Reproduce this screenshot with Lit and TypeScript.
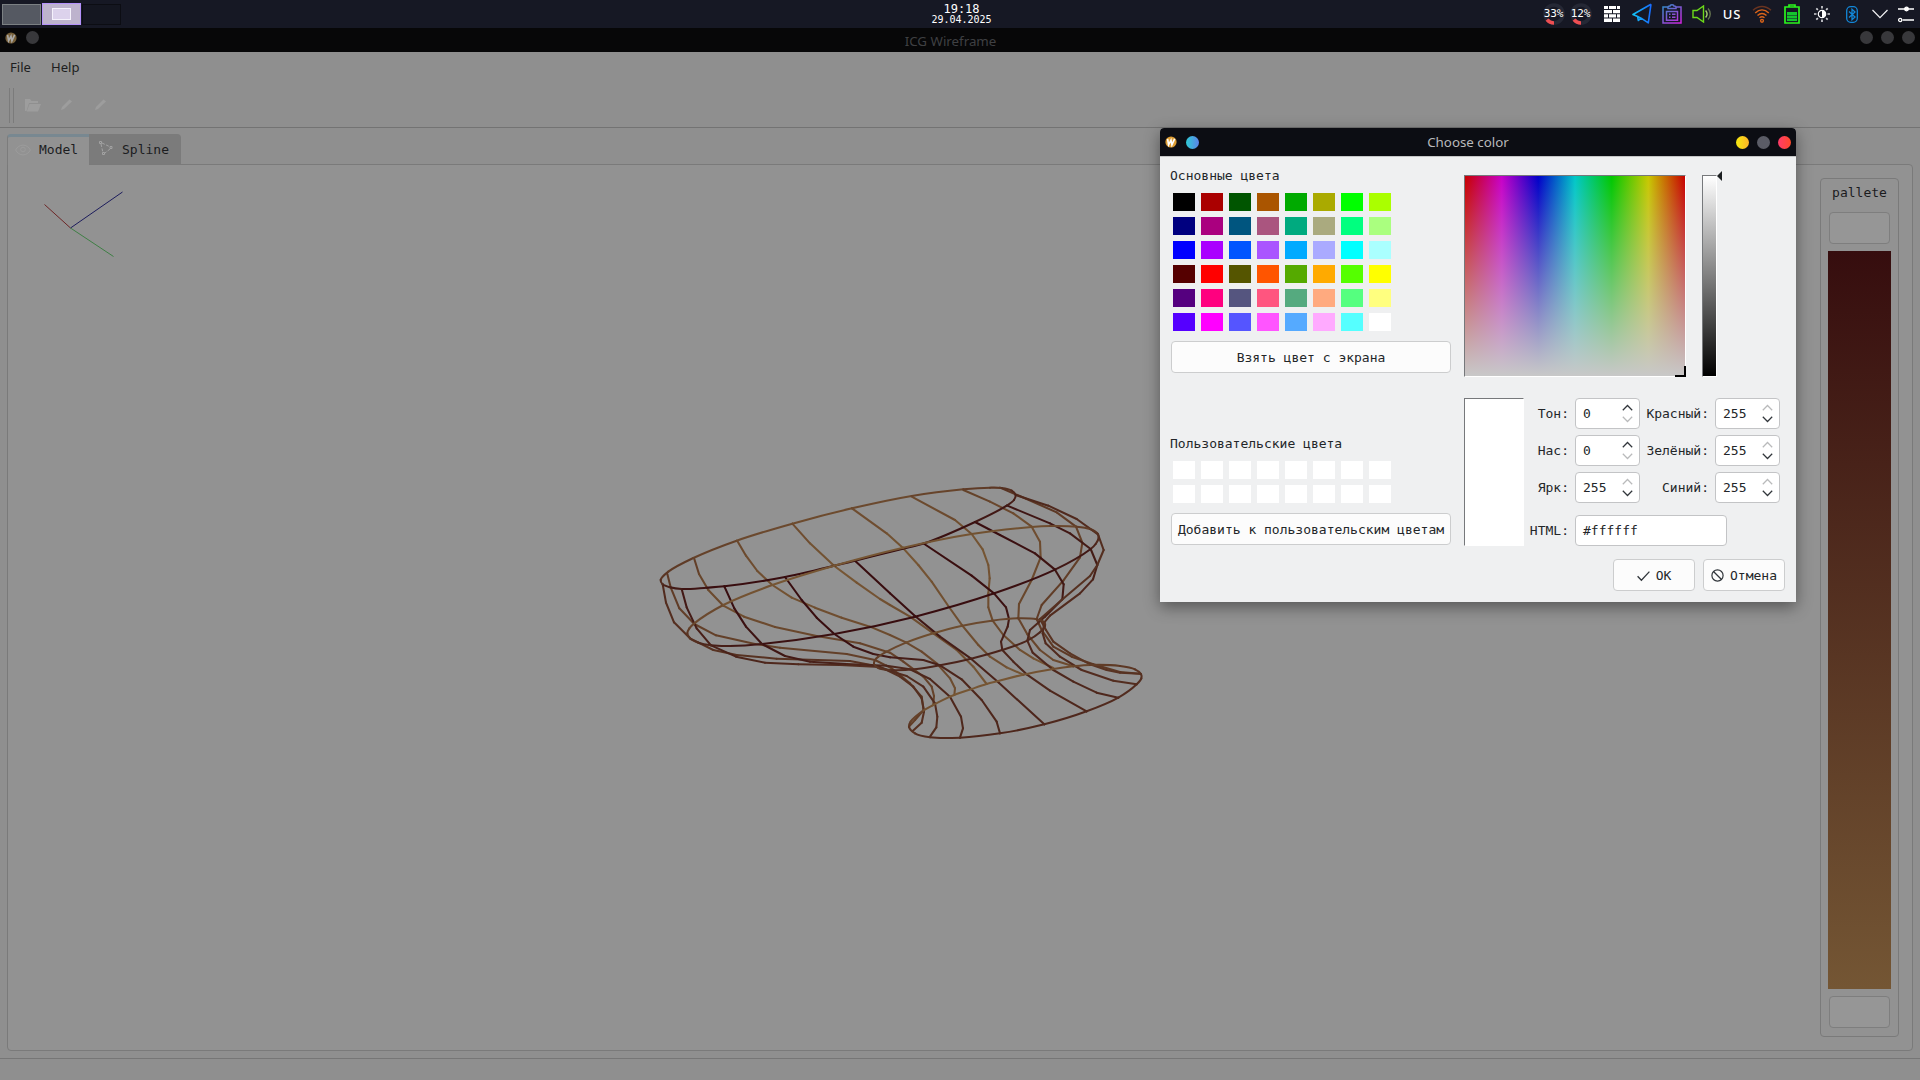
import { LitElement, html, css, svg } from "lit";
import { customElement } from "lit/decorators.js";

const BASIC: string[][] = [
  ["#000000", "#aa0000", "#005500", "#aa5500", "#00aa00", "#aaaa00", "#00ff00", "#aaff00"],
  ["#00007f", "#aa007f", "#00557f", "#aa557f", "#00aa7f", "#aaaa7f", "#00ff7f", "#aaff7f"],
  ["#0000ff", "#aa00ff", "#0055ff", "#aa55ff", "#00aaff", "#aaaaff", "#00ffff", "#aaffff"],
  ["#550000", "#ff0000", "#555500", "#ff5500", "#55aa00", "#ffaa00", "#55ff00", "#ffff00"],
  ["#55007f", "#ff007f", "#55557f", "#ff557f", "#55aa7f", "#ffaa7f", "#55ff7f", "#ffff7f"],
  ["#5500ff", "#ff00ff", "#5555ff", "#ff55ff", "#55aaff", "#ffaaff", "#55ffff", "#ffffff"],
];
const CUSTOM: string[][] = [Array(8).fill("#ffffff"), Array(8).fill("#ffffff")];

/* Wireframe geometry. Coordinates are in thirds of a pixel; t is the depth
   along the line (0 = near, dark; 1 = far, light). */
interface Line { pts: number[]; t: number[]; ring?: boolean; }

const LINES: Line[] = [
  // meridians, far side
  { pts: [82,312,92,352,118,415,163,462,228,496,345,522,420,533,620,552,705,570,755,595,810,640,845,680,851,720,825,750,807,770], t: [.6,.7,.7,.6,.7] },
  { pts: [162,264,177,312,205,360,250,407,312,440,405,471,530,498,660,520,750,548,790,575,850,620,875,650,882,678,880,702], t: [.65,.9,.75,.7,.75] },
  { pts: [292,213,318,257,352,303,397,345,455,383,525,413,605,443,690,470,750,495,798,517,845,545,890,580,930,625,945,655,943,675], t: [.8,.95,.85,.8,.9] },
  { pts: [457,161,510,220,583,288,650,338,720,387,750,405,810,440,880,490,950,540,1000,590,1040,642], t: [.85,1,.9,.85,1] },
  { pts: [636,115,740,190,790,235,835,285,875,335,925,408,967,467,1015,525,1050,560,1100,592,1150,614], t: [.85,1,.9,.85,1] },
  { pts: [815,80,945,150,995,192,1028,238,1045,285,1049,325,1045,370,1045,412,1058,452,1090,495,1140,540,1180,565,1240,594], t: [.8,1,.9,.8,1] },
  { pts: [970,60,1050,95,1120,130,1175,170,1200,215,1202,262,1175,330,1137,402,1135,445,1162,493,1200,540,1240,570,1300,589], t: [.7,.9,.8,.75,.85] },
  { pts: [1080,53,1160,87,1250,127,1308,170,1327,218,1320,262,1270,332,1205,405,1190,447,1205,480,1240,530,1295,560,1360,583,1440,606,1500,611], t: [.5,.7,.65,.6,.6] },
  // meridians, near side
  { pts: [68,343,78,398,102,457,150,505,220,540,290,555,410,566,630,573,705,587,740,600,780,620,820,650,845,685,852,725,845,758,818,783], t: [.4,.5,.5,.45,.5] },
  { pts: [125,357,140,412,170,475,213,526,288,560,375,578,475,583,600,585,720,591,750,603,800,618,850,650,885,700,892,740,889,772,870,800], t: [.15,.3,.45,.4,.45] },
  { pts: [253,349,283,415,318,470,366,522,435,558,510,575,620,582,740,587,810,598,870,627,930,680,963,740,969,775,960,803], t: [0,.1,.35,.35,.4] },
  { pts: [435,321,485,390,530,443,583,492,640,530,700,552,750,562,850,570,900,586,965,628,1025,690,1070,755,1080,790], t: [0,0,.2,.35,.35] },
  { pts: [645,272,750,370,825,438,900,500,993,566,1075,637,1213,763], t: [0,0,.2,.3,.35] },
  { pts: [853,222,995,317,1062,370,1098,412,1107,447,1103,470,1083,515,1087,540,1120,575,1160,613,1230,662,1340,724], t: [0,.05,.25,.35,.35] },
  { pts: [1005,156,1080,195,1185,250,1245,299,1271,343,1267,388,1215,440,1170,480,1162,512,1178,548,1240,600,1300,635,1370,668,1435,683], t: [0,.1,.35,.35,.35] },
  { pts: [1102,107,1230,160,1290,190,1352,237,1372,285,1359,328,1320,370,1230,437,1213,457,1208,490,1217,520,1260,560,1325,600,1420,632,1490,643], t: [.1,.2,.45,.4,.45] },
  { pts: [1127,75,1225,107,1310,147,1374,193,1391,240,1372,285,1350,318,1265,390,1200,447,1218,480,1240,515,1290,550,1350,583,1400,600,1440,608,1500,611], t: [.35,.45,.5,.55,.5] },
  // rings, top to bottom
  { ring: true, t: [.5,.6,.65,.8,.85,.85,.8,.7,.6,.55,.4,.3,.25,.2,.1,0,0,0,0,0,.05,.15,.2,.35],
    pts: [62,330,85,305,160,264,290,212,457,161,636,115,815,78,970,58,1050,53,1085,54,1115,62,1127,75,1122,90,1100,107,1005,156,853,220,810,231,645,272,435,321,253,349,200,353,125,357,90,352,68,343] },
  { ring: true, t: [.6,.7,.75,.9,1,1,1,.95,.9,.85,.75,.6,.5,.45,.35,.25,.05,0,0,0,.1,.2,.3,.4,.5],
    pts: [142,490,148,475,163,460,250,405,397,345,583,287,790,233,995,192,1175,171,1230,168,1310,170,1350,177,1372,190,1376,203,1367,222,1352,237,1245,299,1063,370,825,440,583,492,366,522,270,528,213,526,175,518,150,505] },
  { ring: true, t: [.6,.65,.7,.75,.85,.9,.85,.8,.75,.65,.55,.5,.4,.35,.3,.3,.3,.35,.45,.55],
    pts: [702,582,705,570,715,560,740,545,798,518,880,490,967,467,1055,452,1133,445,1190,448,1213,457,1215,468,1200,487,1162,512,1086,540,993,566,900,586,830,597,750,600,715,594] },
  { ring: true, t: [.55,.6,.85,.95,1,1,1,1,1,.9,.8,.7,.6,.55,.5,.45,.45,.4,.4,.35,.35,.4,.4,.5],
    pts: [807,770,812,755,850,722,878,706,930,680,995,657,1040,642,1075,633,1150,614,1240,597,1300,589,1350,585,1440,588,1485,598,1503,612,1504,625,1490,643,1435,683,1340,724,1213,763,1080,790,960,803,870,802,825,790] },
];

function shade(t: number): string {
  const near = [56, 13, 15], far = [118, 86, 52];
  return `rgb(${near.map((n, i) => Math.round(n + (far[i] - n) * t)).join(",")})`;
}

function sample(values: number[], f: number): number {
  const p = Math.max(0, Math.min(values.length - 1, f * (values.length - 1)));
  const i = Math.min(values.length - 2, Math.floor(p));
  return values[i] + (values[i + 1] - values[i]) * (p - i);
}

function drawLine(line: Line) {
  const n = line.pts.length / 2;
  const at = (i: number) => { const k = ((i % n) + n) % n; return [line.pts[2 * k], line.pts[2 * k + 1]]; };
  const out: unknown[] = [];
  if (!line.ring) {
    for (let i = 0; i < n - 1; i++) {
      const [a, b] = [at(i), at(i + 1)];
      out.push(svg`<path d="M${a[0]} ${a[1]}L${b[0]} ${b[1]}" stroke=${shade(sample(line.t, (i + .5) / (n - 1)))}></path>`);
    }
    return out;
  }
  for (let i = 0; i < n; i++) {
    const [p0, p1, p2, p3] = [at(i - 1), at(i), at(i + 1), at(i + 2)];
    // centripetal Catmull-Rom span, converted to a cubic Bezier
    const d = (a: number[], b: number[]) => Math.sqrt(Math.hypot(a[0] - b[0], a[1] - b[1]));
    const [d1, d2, d3] = [d(p0, p1), d(p1, p2), d(p2, p3)];
    const c1 = [0, 1].map(k => (d1 * d1 * p2[k] - d2 * d2 * p0[k] + (2 * d1 * d1 + 3 * d1 * d2 + d2 * d2) * p1[k]) / (3 * d1 * (d1 + d2)));
    const c2 = [0, 1].map(k => (d3 * d3 * p1[k] - d2 * d2 * p3[k] + (2 * d3 * d3 + 3 * d3 * d2 + d2 * d2) * p2[k]) / (3 * d3 * (d3 + d2)));
    const t = (line.t[i] + line.t[(i + 1) % n]) / 2;
    out.push(svg`<path d="M${p1[0]} ${p1[1]}C${c1[0]} ${c1[1]} ${c2[0]} ${c2[1]} ${p2[0]} ${p2[1]}" stroke=${shade(t)}></path>`);
  }
  return out;
}

@customElement("app-root")
export class AppRoot extends LitElement {
  static styles = css`
    :host { display: block; width: 1920px; height: 1080px; overflow: hidden; position: relative;
      font: 13px/16px "DejaVu Sans Mono", "Liberation Mono", monospace; color: #232629; }
    * { box-sizing: border-box; }
    svg { display: block; flex: none; }
    .screen { display: flex; flex-direction: column; height: 1080px; background: #8f8f8f; }
    .panel { height: 28px; flex: none; background: #161824; display: grid; grid-template-columns: 1fr auto 1fr; color: #fff; }
    .pager { display: flex; gap: 1px; padding: 4px 0 0 2px; }
    .desk { width: 39px; height: 21px; border: 1px solid #7b8083; background: #555962; }
    .desk.active { border-color: #b491fb; background: #bdb3cd; padding: 4px 9px; height: 22px; margin-top: -1px; }
    .desk.empty { border-color: #0c0d13; background: #141620; }
    .mini { height: 12px; border: 1px solid #f5f2fc; background: #dcd2ec; }
    .clock { text-align: center; padding-top: 2px; padding-left: 3px; }
    .time { font-size: 12px; line-height: 14px; height: 12px; }
    .date { font-size: 10px; line-height: 11px; }
    .tray { display: flex; justify-content: flex-end; padding-right: 1px; }
    .cell { width: 30px; height: 28px; display: flex; align-items: center; justify-content: center; }
    .cell.narrow { width: 26px; }
    .cell.load { width: 27px; display: grid; font-size: 11px; letter-spacing: -.1px; }
    .cell.load > * { grid-area: 1 / 1; place-self: center; }
    .cell.last { margin-right: 3px; }
    .lang { font: 500 13px/28px "Noto Sans", sans-serif; letter-spacing: .9px; }
    .title { height: 24px; flex: none; background: #070708; color: #3f4043; display: grid; grid-template-columns: 1fr auto 1fr; padding: 0 5px; font: 13.33px/26px "Noto Sans", sans-serif; }
    .title .name { margin-left: -19px; }
    .left, .right { display: flex; align-items: center; }
    .title .left, .title .right { height: 19px; }
    .right { justify-content: flex-end; }
    .dot { width: 13px; height: 13px; border-radius: 50%; background: #38383b; }
    .left .dot { margin-left: 9px; }
    .title .right { gap: 8px; }
    .menu { height: 31px; flex: none; display: flex; gap: 20px; padding: 0 10px; font: 13.1px/31px "Noto Sans", sans-serif; color: #1d1e20; }
    .tools { height: 45px; flex: none; border-bottom: 1px solid #737373; display: flex; padding: 5px 9px; }
    .grip { width: 5px; height: 35px; border: solid #7b7b7b; border-width: 0 1px; }
    .tools svg { margin-top: 6px; }
    .tools .folder { margin-left: 8px; }
    .tools .pen { margin-left: 10px; }
    .work { flex: 1; display: flex; flex-direction: column; padding: 6px 7px 7px; }
    .tabs { display: flex; height: 31px; margin-bottom: -1px; z-index: 1; }
    .tab { height: 30px; display: flex; align-items: center; line-height: 30px; color: #1c1d1f; }
    .tab.on { width: 82px; height: 31px; background: #929292; border: 1px solid #7c7c7c; border-top: 3px solid #788891; border-right: 0; border-bottom: 0; border-radius: 4px 0 0 0; padding: 0 0 2px 7px; line-height: 26px; gap: 8px; }
    .tab.off { width: 92px; background: #7b7b7b; border-radius: 0 4px 0 0; padding: 2px 0 0 9px; gap: 8px; }
    .tab.off svg { margin-top: -5px; }
    .pane { flex: 1; display: flex; background: #929292; border: 1px solid #7a7a7a; border-radius: 0 4px 4px 4px; padding: 13px; }
    .canvas { flex: 1; overflow: visible; min-width: 0; }
    .canvas svg { overflow: visible; }
    .group { width: 79px; border: 1px solid #7a7a7a; border-radius: 4px; display: flex; flex-direction: column; align-items: center; padding: 6px 7px 8px; color: #1b1c1e; }
    .knob { width: 61px; height: 32px; border: 1px solid #7e7e7e; border-radius: 4px; background: #969696; flex: none; }
    .ramp { width: 63px; flex: 1; margin: 7px 0; background: linear-gradient(#360d0e, #745634); }
    .group .cap { height: 27px; line-height: 16px; }
    .status { height: 22px; flex: none; border-top: 1px solid #767676; }

    .dialog { position: absolute; left: 1160px; top: 128px; width: 636px; height: 474px; background: #eff0f1; border-radius: 4px 4px 0 0; box-shadow: 0 5px 16px rgba(0,0,0,.42); display: flex; flex-direction: column; }
    .bar { height: 28px; flex: none; background: #0c0d13; border-radius: 4px 4px 0 0; display: grid; grid-template-columns: 1fr auto 1fr; padding: 0 5px; font: 13.33px/28px "Noto Sans", sans-serif; color: #b8b9bb; }
    .bar .name { margin-left: -20px; }
    .bar .right { gap: 8px; }
    .bar .dot.app { background: linear-gradient(90deg, #2fcbd6, #5c83e8); }
    .dot.min { background: linear-gradient(90deg, #f6ea10, #ffb428); }
    .dot.max { background: #5b5c66; }
    .dot.close { background: linear-gradient(90deg, #ff3b6b, #ff4a2a); }
    .body { flex: 1; display: flex; padding: 11px 11px 0 11px; border-top: 1px solid #c4c5c6; }
    .colors { width: 280px; margin-right: 13px; display: flex; flex-direction: column; }
    .label { height: 25px; line-height: 16px; margin-left: -1px; flex: none; }
    .swatches { display: grid; grid-template-columns: repeat(8, 22px); gap: 6px; grid-auto-rows: 18px; margin-left: 2px; }
    .btn { border: 1px solid #cccdce; border-radius: 4px; background: #fcfcfc; display: flex; align-items: center; justify-content: center; height: 32px; flex: none; padding-top: 1px; white-space: nowrap; }
    .colors .btn { margin-top: 10px; }
    .gap { height: 63px; flex: none; }
    .edit { flex: 1; display: flex; flex-direction: column; padding-top: 7px; }
    .pick { display: flex; height: 203px; }
    .sunk { border: 1px solid #fff; border-top-color: #76787b; border-left-color: #76787b; }
    .hues { width: 222px; height: 202px; position: relative;
      background: linear-gradient(rgba(200,200,200,0), rgb(200,200,200)), linear-gradient(90deg, #c80000, #c800c8 16.67%, #0000c8 33.33%, #00c8c8 50%, #00c800 66.67%, #c8c800 83.33%, #c80000); }
    .mark { position: absolute; right: -1px; bottom: -1px; width: 11px; height: 11px; border: solid #000; border-width: 0 2px 2px 0; }
    .lum { width: 15px; height: 202px; margin-left: 16px; background: linear-gradient(#fff, #000); }
    .arrow { margin-top: -4px; }
    .fields { display: flex; margin-top: 20px; }
    .preview { width: 60px; height: 148px; background: #fff; }
    .grid { display: grid; grid-template-columns: 46px 65px 67px 65px; grid-template-rows: 37px 37px 43px 31px; margin-left: 1px; column-gap: 4px; }
    .lab { line-height: 31px; padding-right: 2px; white-space: nowrap; justify-self: end; }
    .input { height: 31px; border: 1px solid #c3c4c6; border-radius: 4px; background: #fff; line-height: 29px; padding: 0 6px 0 7px; display: flex; justify-content: space-between; align-items: center; }
    .hex { grid-column: 2 / 5; width: 152px; }
    .actions { display: flex; gap: 8px; margin: 13px 0 0 149px; }
    .actions .btn { width: 82px; gap: 6px; }
  `;

  private badge(bg: string, fg: string) {
    return html`<svg width="12" height="12" viewBox="0 0 12 12"><circle cx="6" cy="6" r="5.6" fill=${bg}></circle><path d="M2.6 3l1 5.8L6 4.2l.9 4.6L9.6 2.8" fill="none" stroke=${fg} stroke-width="1.6"></path></svg>`;
  }

  private swatches(rows: string[][]) {
    return html`<div class="swatches">${rows.flat().map(c => html`<div style="background:${c}"></div>`)}</div>`;
  }

  private spin(value: string, up: boolean, down: boolean) {
    const on = "#31363b", off = "#b9babb";
    return html`<div class="input"><span>${value}</span><svg width="11" height="19" viewBox="0 0 11 19" fill="none" stroke-width="1.25">
      <path d="M.8 6.2L5.5 1.5l4.7 4.7" stroke=${up ? on : off}></path><path d="M.8 12.8l4.7 4.7 4.7-4.7" stroke=${down ? on : off}></path></svg></div>`;
  }

  private load(text: string, last = false) {
    return html`<div class="cell load ${last ? "last" : ""}"><svg width="22" height="22" viewBox="0 0 22 22" fill="none" stroke-width="3.6"><circle cx="11" cy="11" r="9" stroke="#252835"></circle><path d="M4 16.700A9 9 0 0 0 11 20" stroke="#ee4e52"></path></svg><span>${text}</span></div>`;
  }

  private tray() {
    return html`<div class="tray">
      ${this.load("33%")}${this.load("12%", true)}
      <div class="cell"><svg width="16" height="16" viewBox="0 0 16 16" fill="#fff"><path d="M0 0h4v3H0zM5 0h7v3H5zM13 0h3v3h-3zM0 4h8v3.2H0zM9 4h7v3.2H9zM0 8.3h4v3.2H0zM5 8.3h7v3.2H5zM13 8.3h3v3.2h-3zM0 12.6h8V16H0zM9 12.6h7V16H9z"></path></svg></div>
      <div class="cell"><svg width="20" height="22" viewBox="0 0 20 22" fill="none" stroke="url(#tg)" stroke-width="1.6" stroke-linejoin="round"><defs><linearGradient id="tg" gradientUnits="userSpaceOnUse" x1="0" x2="20" y1="10" y2="10"><stop offset="0" stop-color="#12c8f5"></stop><stop offset="1" stop-color="#1766ff"></stop></linearGradient></defs><path d="M19 1.200L1 11.500l4.600 2 .8 4 2.700-2.300 7.200 4.600L19 1.200M5.600 13.500l3.500 1.700"></path></svg></div>
      <div class="cell"><svg width="20" height="20" viewBox="0 0 20 20" fill="none" stroke="url(#cb)" stroke-width="1.5"><defs><linearGradient id="cb" gradientUnits="userSpaceOnUse" x1="2" y1="0" x2="18" y2="20"><stop offset="0" stop-color="#2c8fc9"></stop><stop offset="1" stop-color="#d423e0"></stop></linearGradient></defs><path d="M6 3H1v16h18V3h-5M6 4.500V3c0-1 1-1 2-1 0-1.600 4-1.600 4 0 1 0 2 0 2 1v1.500zM4.500 7.500h11v8.700h-11zM7 10.300h1.500M10 10.300h3.500M7 13.300h1.500M10 13.300h3.500"></path></svg></div>
      <div class="cell"><svg width="20" height="18" viewBox="0 0 20 18" fill="none" stroke="#6cd91a" stroke-width="1.4"><path d="M1 5.500h4L11.500 1v16L5 12.500H1z"></path><path d="M13.600 5.500c1.700 2 1.700 5 0 7" stroke="#a4cf6c"></path><path d="M16 3.500c3 3.200 3 7.800 0 11" stroke="#64724f"></path></svg></div>
      <div class="cell"><span class="lang">US</span></div>
      <div class="cell"><svg width="20" height="18" viewBox="0 0 20 18" fill="none" stroke="#d9641a" stroke-width="1.400"><path d="M1 5.200c5.500-5 12.500-5 18 0" stroke="#6a3420"></path><path d="M3.200 8c4.200-4 9.400-4 13.600 0M5.500 10.500c2.900-2.700 6.100-2.700 9 0M7.500 12.800c1.600-1.400 3.400-1.400 5 0"></path><circle cx="10" cy="15.800" r="1.400"></circle></svg></div>
      <div class="cell"><svg width="16" height="20" viewBox="0 0 16 20"><path d="M1 3h14v16H1zM5 3V1h6v2" fill="none" stroke="#2bf51c" stroke-width="1.700"></path><path d="M3 8h10v3H3zM3 11.500h10v2.500H3zM3 14.500h10V17H3z" fill="#14c42e"></path></svg></div>
      <div class="cell"><svg width="16" height="16" viewBox="0 0 16 16"><g stroke="#cfd0d4" stroke-width="1.700"><path d="M8 0v2.500M8 13.500V16M0 8h2.500M13.500 8H16M2.300 2.300l1.600 1.600M12.100 12.100l1.600 1.600M2.300 13.700l1.600-1.600M12.100 3.900l1.600-1.600"></path></g><circle cx="8" cy="8" r="3.700" fill="none" stroke="#fff" stroke-width="1.200"></circle><path d="M8 4.300a3.700 3.700 0 0 1 0 7.400z" fill="#fff"></path></svg></div>
      <div class="cell"><svg width="12" height="17" viewBox="0 0 12 17" fill="none" stroke="#1287d8" stroke-width="1.300"><rect x=".7" y=".7" width="10.600" height="15.600" rx="4"></rect><path d="M3 5.500l6 5.500-3 2.700V3.300L9 6l-6 5.500"></path></svg></div>
      <div class="cell narrow"><svg width="16" height="10" viewBox="0 0 16 10" fill="none" stroke="#f2f2f4" stroke-width="1.200"><path d="M.5 1L8 8.700 15.500 1"></path></svg></div>
      <div class="cell narrow"><svg width="16" height="17" viewBox="0 0 16 17" fill="none" stroke="#fff" stroke-width="1.300"><path d="M0 3h16M4.500 14H16"></path><circle cx="8.500" cy="3" r="1.800" fill="#fff"></circle><circle cx="2.200" cy="14" r="1.600"></circle></svg></div>
    </div>`;
  }

  private dialog() {
    return html`<div class="dialog">
      <div class="bar"><div class="left">${this.badge("#dd9d33", "#fff")}<div class="dot app"></div></div><div class="name">Choose color</div>
        <div class="right"><div class="dot min"></div><div class="dot max"></div><div class="dot close"></div></div></div>
      <div class="body">
        <div class="colors">
          <div class="label">Основные цвета</div>
          ${this.swatches(BASIC)}
          <div class="btn">Взять цвет с экрана</div>
          <div class="gap"></div>
          <div class="label">Пользовательские цвета</div>
          ${this.swatches(CUSTOM)}
          <div class="btn">Добавить к пользовательским цветам</div>
        </div>
        <div class="edit">
          <div class="pick">
            <div class="hues sunk"><div class="mark"></div></div>
            <div class="lum sunk"></div>
            <svg class="arrow" width="6" height="10" viewBox="0 0 6 10"><path d="M5 0v10L0 5z" fill="#1b1e20"></path></svg>
          </div>
          <div class="fields">
            <div class="preview sunk"></div>
            <div class="grid">
              <span class="lab">Тон:</span>${this.spin("0", true, false)}<span class="lab">Красный:</span>${this.spin("255", false, true)}
              <span class="lab">Нас:</span>${this.spin("0", true, false)}<span class="lab">Зелёный:</span>${this.spin("255", false, true)}
              <span class="lab">Ярк:</span>${this.spin("255", false, true)}<span class="lab">Синий:</span>${this.spin("255", false, true)}
              <span class="lab">HTML:</span><div class="input hex">#ffffff</div>
            </div>
          </div>
          <div class="actions">
            <div class="btn"><svg width="13" height="12" viewBox="0 0 13 12" fill="none" stroke="#31363b" stroke-width="1.300"><path d="M.6 6.200l3.800 4L12.400 1.600"></path></svg>OK</div>
            <div class="btn"><svg width="13" height="13" viewBox="0 0 13 13" fill="none" stroke="#31363b" stroke-width="1.200"><circle cx="6.500" cy="6.500" r="5.600"></circle><path d="M2.500 2.500l8 8"></path></svg>Отмена</div>
          </div>
        </div>
      </div>
    </div>`;
  }

  render() {
    return html`
      <div class="screen">
        <div class="panel">
          <div class="pager"><div class="desk"></div><div class="desk active"><div class="mini"></div></div><div class="desk empty"></div></div>
          <div class="clock"><div class="time">19:18</div><div class="date">29.04.2025</div></div>
          ${this.tray()}
        </div>
        <div class="title"><div class="left">${this.badge("#77603a", "#aaa")}<div class="dot"></div></div><div class="name">ICG Wireframe</div>
          <div class="right"><div class="dot"></div><div class="dot"></div><div class="dot"></div></div></div>
        <div class="menu"><span>File</span><span>Help</span></div>
        <div class="tools">
          <div class="grip"></div>
          <svg class="folder" width="22" height="22" viewBox="0 0 22 22"><path d="M3 5h5l1.500 2H16v2H7L4.500 17H3z M7.500 10H19l-3 7.500H4.800z" fill="#9d9d9d"></path></svg>
          <svg class="pen" width="24" height="22" viewBox="0 0 24 22"><path d="M7 16l1-3 7.500-7.500 2.500 2L10 15z" fill="#9d9d9d"></path></svg>
          <svg class="pen" width="24" height="22" viewBox="0 0 24 22"><path d="M7 16l1-3 7.500-7.500 2.500 2L10 15z" fill="#9d9d9d"></path></svg>
        </div>
        <div class="work">
          <div class="tabs">
            <div class="tab on"><svg width="16" height="12" viewBox="0 0 16 12" fill="none" stroke="#9c9c9c"><path d="M.6 6C4-.5 12-.5 15.400 6 12 12.500 4 12.500.6 6z"></path><circle cx="8" cy="5.500" r="2.300"></circle></svg>Model</div>
            <div class="tab off"><svg width="16" height="16" viewBox="0 0 16 16" fill="none" stroke="#a3a3a3"><path d="M1.500 1.500h2v2h-2zM12 6.500h2v2h-2zM4.500 12.500h2v2h-2z"></path><path d="M4 3l8 3.800M12 9l-5 4M3 4l1.800 8" stroke-dasharray="3 1.500"></path></svg>Spline</div>
          </div>
          <div class="pane">
            <div class="canvas">
              <svg width="1797" height="800" viewBox="21 178 1797 800" fill="none">
                <path d="M70.500 228L44.500 204.500" stroke="#6d2626"></path><path d="M70.500 228L122.500 192" stroke="#1c1c5c"></path><path d="M70.500 228L113.500 256.500" stroke="#3f7f45"></path>
                <g transform="translate(640 470) scale(.33333)" stroke-width="6.200" stroke-linecap="round">${LINES.map(drawLine)}</g>
              </svg>
            </div>
            <div class="group"><div class="cap">pallete</div><div class="knob"></div><div class="ramp"></div><div class="knob"></div></div>
          </div>
        </div>
        <div class="status"></div>
      </div>
      ${this.dialog()}`;
  }
}
